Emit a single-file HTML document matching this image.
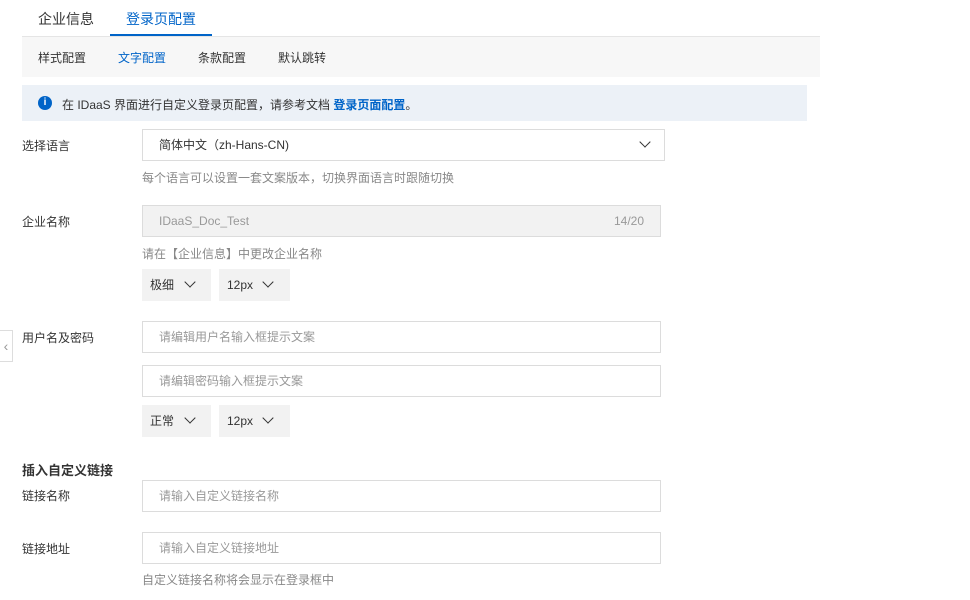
<!DOCTYPE html>
<html><head><meta charset="utf-8"><style>
*{margin:0;padding:0;box-sizing:border-box}
body{width:970px;height:600px;background:#fff;font-family:"Liberation Sans","Noto Sans CJK SC",sans-serif;color:#333;font-size:12px;position:relative;overflow:hidden}
.a{position:absolute}
.tab{font-size:14px;color:#333;top:9px}
.inp{position:absolute;left:142px;width:519px;height:32px;border:1px solid #dcdcdc;background:#fff;padding-left:16px;line-height:30px;color:#999;font-size:12px}
.lbl{position:absolute;left:22px;font-size:12px;color:#333}
.hint{position:absolute;left:142px;color:#888;font-size:12px}
.sel{position:absolute;height:32px;background:#f2f2f2;line-height:32px;padding-left:8px;font-size:12px;color:#333}
.chev{position:absolute;top:11px;width:8px;height:8px;border-right:1.3px solid #333;border-bottom:1.3px solid #333;transform:rotate(45deg)}
</style></head><body>
<div class="a tab" style="left:38px">企业信息</div>
<div class="a tab" style="left:126px;color:#0064c8">登录页配置</div>
<div class="a" style="left:22px;top:36px;width:798px;height:1px;background:#e5e5e5"></div>
<div class="a" style="left:110px;top:34px;width:102px;height:2px;background:#0064c8"></div>
<div class="a" style="left:22px;top:37px;width:798px;height:40px;background:#f7f7f7"></div>
<div class="a" style="left:38px;top:49px">样式配置</div>
<div class="a" style="left:118px;top:49px;color:#0064c8">文字配置</div>
<div class="a" style="left:198px;top:49px">条款配置</div>
<div class="a" style="left:278px;top:49px">默认跳转</div>
<div class="a" style="left:22px;top:85px;width:785px;height:36px;background:#ecf1f7"></div>
<div class="a" style="left:38px;top:96px;width:14px;height:14px;border-radius:50%;background:#0064c8;color:#fff;font-size:10px;font-weight:bold;text-align:center;line-height:14px">i</div>
<div class="a" style="left:62px;top:96px">在 IDaaS 界面进行自定义登录页配置，请参考文档 <span style="color:#0064c8;font-weight:bold">登录页面配置</span>。</div>
<div class="lbl" style="top:137px">选择语言</div>
<div class="inp" style="top:129px;width:523px;color:#333">简体中文（zh-Hans-CN)<div class="chev" style="left:498px;top:8px"></div></div>
<div class="hint" style="top:169px">每个语言可以设置一套文案版本，切换界面语言时跟随切换</div>
<div class="lbl" style="top:213px">企业名称</div>
<div class="inp" style="top:205px;background:#f2f2f2;color:#999">IDaaS_Doc_Test<span style="position:absolute;right:16px">14/20</span></div>
<div class="hint" style="top:245px">请在【企业信息】中更改企业名称</div>
<div class="sel" style="left:142px;top:269px;width:69px">极细<div class="chev" style="left:44px;top:9px"></div></div>
<div class="sel" style="left:219px;top:269px;width:71px">12px<div class="chev" style="left:45px;top:9px"></div></div>
<div class="a" style="left:0;top:330px;width:13px;height:32px;border:1px solid #ddd;border-left:none;background:#fff;color:#999;font-size:14px;line-height:30px;text-align:center">‹</div>
<div class="lbl" style="top:329px">用户名及密码</div>
<div class="inp" style="top:321px">请编辑用户名输入框提示文案</div>
<div class="inp" style="top:365px">请编辑密码输入框提示文案</div>
<div class="sel" style="left:142px;top:405px;width:69px">正常<div class="chev" style="left:44px;top:9px"></div></div>
<div class="sel" style="left:219px;top:405px;width:71px">12px<div class="chev" style="left:45px;top:9px"></div></div>
<div class="a" style="left:22px;top:460px;font-size:13px;font-weight:bold">插入自定义链接</div>
<div class="lbl" style="top:487px">链接名称</div>
<div class="inp" style="top:480px">请输入自定义链接名称</div>
<div class="lbl" style="top:540px">链接地址</div>
<div class="inp" style="top:532px">请输入自定义链接地址</div>
<div class="hint" style="top:571px">自定义链接名称将会显示在登录框中</div>
</body></html>
